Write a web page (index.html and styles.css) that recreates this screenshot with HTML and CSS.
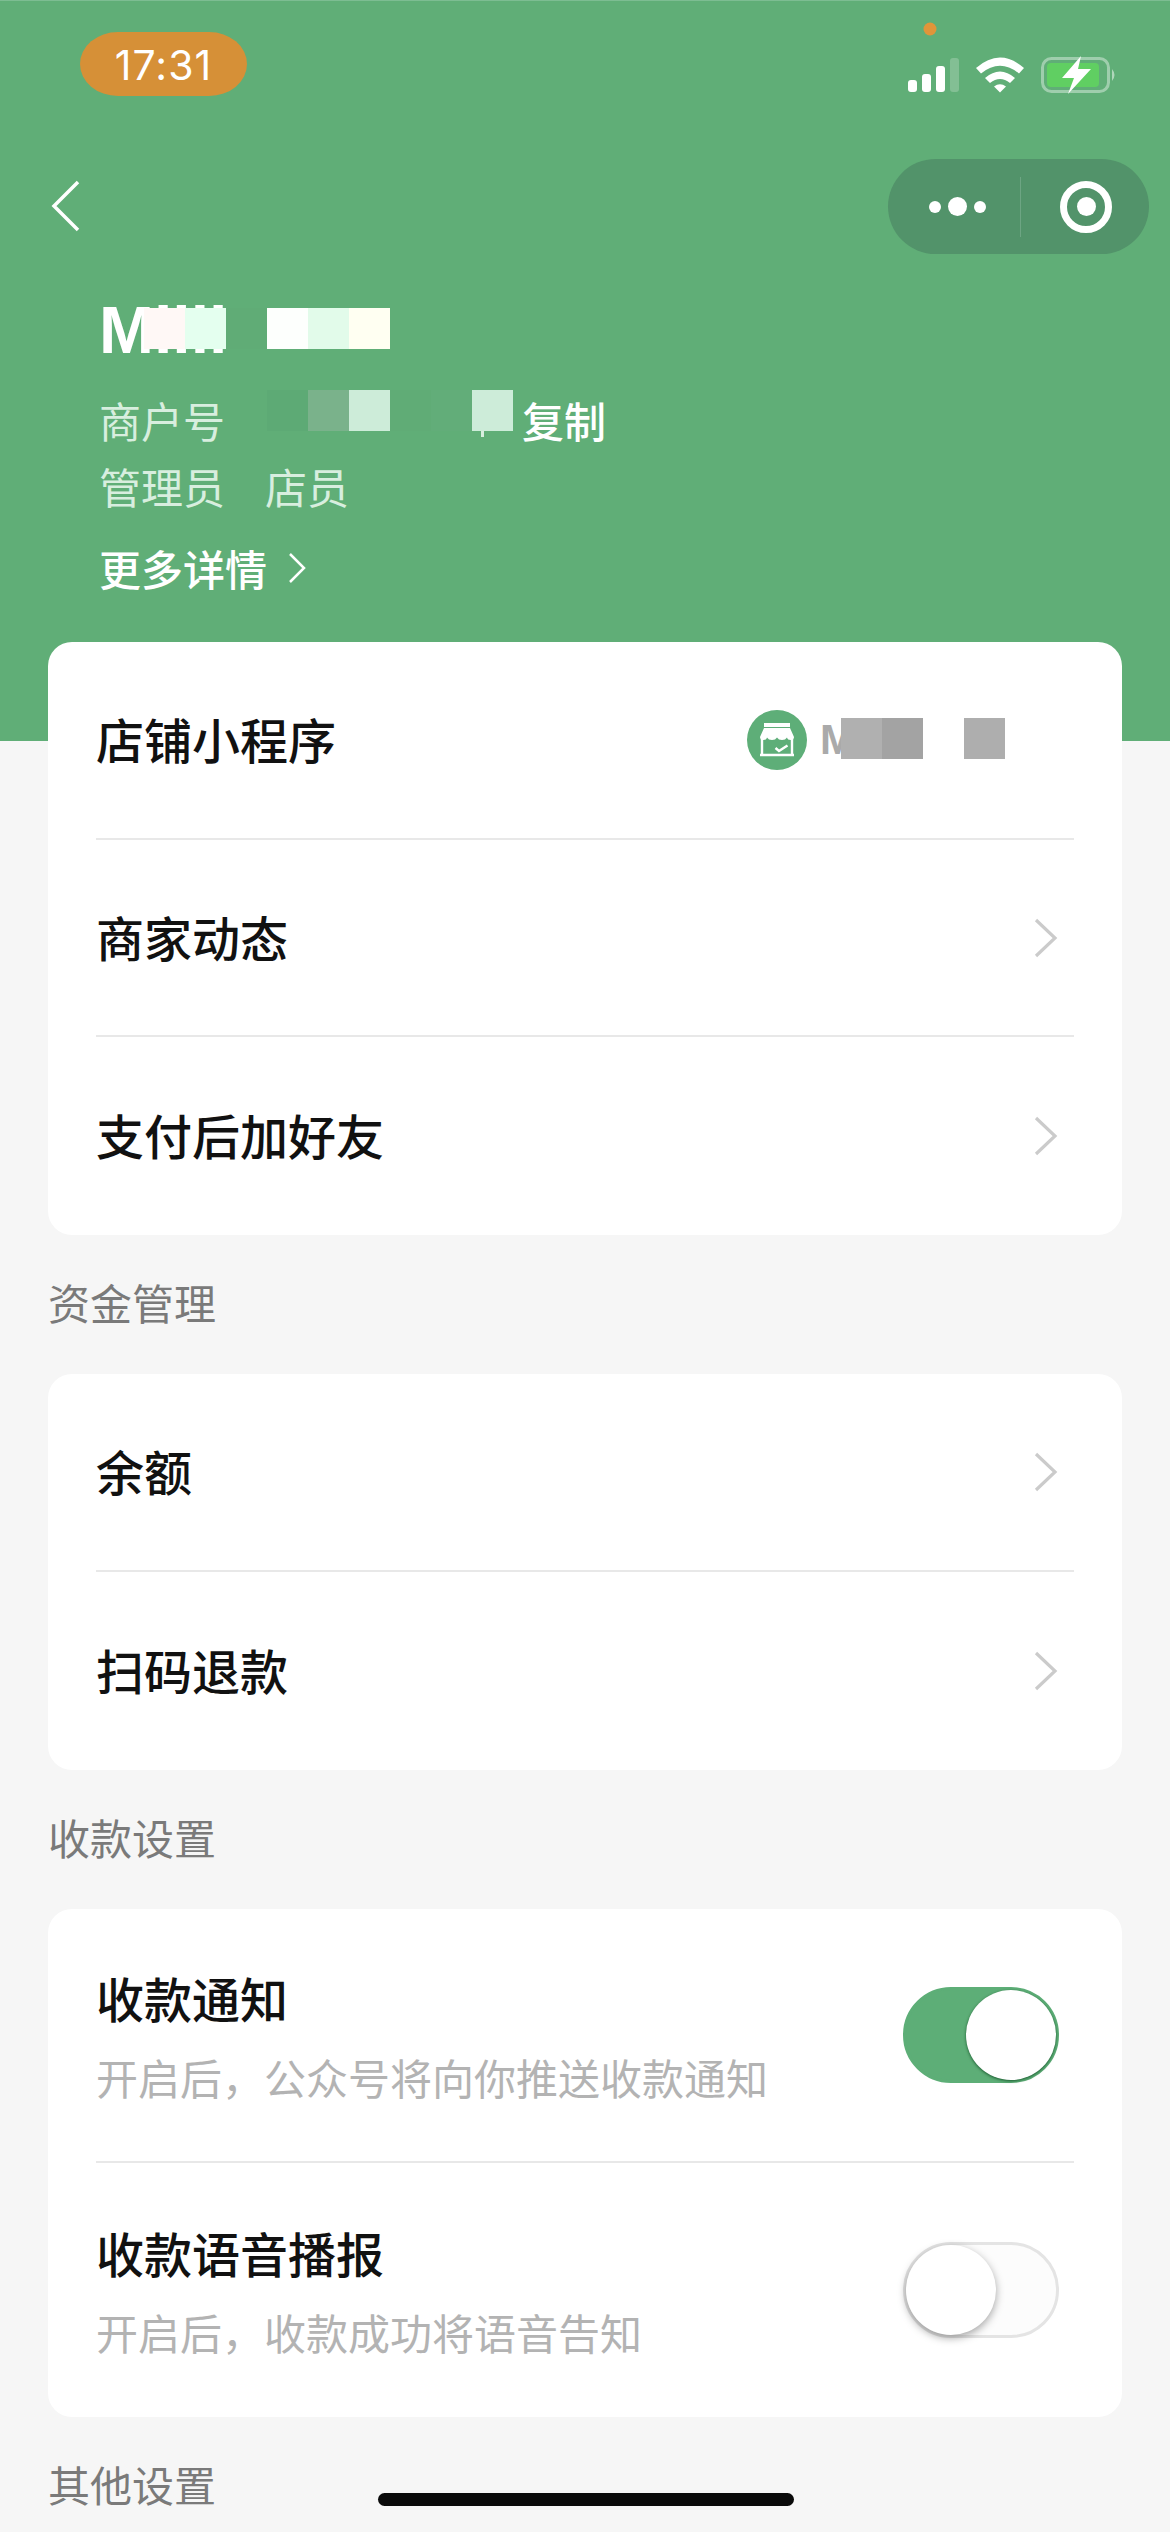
FILE: index.html
```html
<!DOCTYPE html>
<html lang="zh-CN">
<head>
<meta charset="utf-8">
<title>商家助手</title>
<link rel="stylesheet" href="styles.css">
</head>
<body>
<div class="page">
  <header class="hero">
    <div class="status">
      <div class="time">17:31</div>
      <svg class="status-icons" width="230" height="96" viewBox="890 0 230 96">
        <circle cx="929" cy="28" r="6.5" fill="#e0953a"/>
        <rect x="907" y="79" width="9" height="12" rx="3" fill="#fff"/>
        <rect x="921" y="73" width="9" height="18" rx="3" fill="#fff"/>
        <rect x="935" y="65" width="9" height="26" rx="3" fill="#fff"/>
        <rect x="949" y="57" width="9" height="34" rx="3" fill="#fff" opacity=".22"/>
        <path d="M975 67 Q999 46 1023 67 L1018 72.500 Q999 57 980 72.500Z" fill="#fff"/>
        <path d="M984 77 Q999 64 1014 77 L1009 82 Q999 74 989 82Z" fill="#fff"/>
        <path d="M993 85.500 Q999 81 1005 85.500 L999 91.500Z" fill="#fff"/>
        <rect x="1041.500" y="57.500" width="66" height="33" rx="9" fill="none" stroke="#fff" stroke-opacity=".4" stroke-width="3"/>
        <rect x="1046" y="62" width="52" height="24" rx="4" fill="#60cf62"/>
        <path d="M1111 68 Q1116 74 1111 80Z" fill="#fff" fill-opacity=".5"/>
        <path d="M1080 55 L1061 77 L1073 77 L1067 93 L1090 68 L1077 68Z" fill="#fff"/>
      </svg>
    </div>
    <nav class="nav">
      <svg class="back" width="30" height="52" viewBox="0 0 30 52"><path d="M27 2 L3 26 L27 50" fill="none" stroke="#fff" stroke-width="3.500"/></svg>
      <div class="capsule">
        <div class="capsule-more">
          <i class="dot"></i><i class="dot dot-big"></i><i class="dot"></i>
        </div>
        <div class="capsule-sep"></div>
        <div class="capsule-close"><i class="ring"></i></div>
      </div>
    </nav>
    <section class="merchant">
      <div class="name">Milli
        <div class="name-mosaic">
          <i class="cell c-fff6"></i><i class="cell c-e4ff"></i><i class="cell c-bg1"></i><i class="cell c-fff"></i><i class="cell c-e2fb"></i><i class="cell c-fffe"></i>
        </div>
      </div>
      <div class="meta id-row">
        <span class="meta-label">商户号</span>
        <i class="cell c-bg2"></i><i class="cell c-7ab"></i><i class="cell c-cde"></i><i class="cell c-bg1"></i><i class="cell c-bg3"></i><i class="cell c-cde cell-tail"></i>
        <span class="copy">复制</span>
      </div>
      <div class="meta role-row">
        <span class="meta-label">管理员</span><span>店员</span>
      </div>
      <div class="more">更多详情
        <svg width="20" height="32" viewBox="0 0 20 32"><path d="M3 2 L17 16 L3 30" fill="none" stroke="#fff" stroke-width="2.500"/></svg>
      </div>
    </section>
  </header>

  <main class="content">
    <section class="card">
      <div class="row row-a">
        <span class="row-title">店铺小程序</span>
        <div class="shop">
          <svg class="shop-icon" width="60" height="60" viewBox="0 0 60 60">
            <circle cx="30" cy="30" r="30" fill="#5eae78"/>
            <path d="M17 13 H43 V17 H17Z" fill="#fff"/>
            <path d="M17 18 H43 L47 27 Q47 30 43.700 30 Q40.500 30 40 27.500 Q38.500 30 35 30 Q31.500 30 30 27.500 Q28.500 30 25 30 Q21.500 30 20 27.500 Q19.500 30 16.300 30 Q13 30 13 27Z" fill="#fff"/>
            <path d="M15 29 V45 M45 29 V45" stroke="#fff" stroke-width="2.400"/>
            <path d="M13 45 H47" stroke="#fff" stroke-width="2.400"/>
            <path d="M28.500 38 L32 41 L40.500 35.500" fill="none" stroke="#fff" stroke-width="2.400"/>
          </svg>
          <span class="shop-name">M</span>
          <div class="shop-mosaic"><i class="cell c-b0"></i><i class="cell c-a3"></i><i class="cell c-none"></i><i class="cell c-ae"></i></div>
        </div>
      </div>
      <div class="row">
        <span class="row-title">商家动态</span>
        <svg class="chev" width="26" height="42" viewBox="0 0 26 42"><path d="M3 3 L22 21 L3 39" fill="none" stroke="#cbcbcb" stroke-width="3.200"/></svg>
      </div>
      <div class="row row-end">
        <span class="row-title">支付后加好友</span>
        <svg class="chev" width="26" height="42" viewBox="0 0 26 42"><path d="M3 3 L22 21 L3 39" fill="none" stroke="#cbcbcb" stroke-width="3.200"/></svg>
      </div>
    </section>

    <h2 class="section-title">资金管理</h2>
    <section class="card">
      <div class="row row-a">
        <span class="row-title">余额</span>
        <svg class="chev" width="26" height="42" viewBox="0 0 26 42"><path d="M3 3 L22 21 L3 39" fill="none" stroke="#cbcbcb" stroke-width="3.200"/></svg>
      </div>
      <div class="row row-end">
        <span class="row-title">扫码退款</span>
        <svg class="chev" width="26" height="42" viewBox="0 0 26 42"><path d="M3 3 L22 21 L3 39" fill="none" stroke="#cbcbcb" stroke-width="3.200"/></svg>
      </div>
    </section>

    <h2 class="section-title">收款设置</h2>
    <section class="card">
      <div class="row row-tall">
        <div class="row-text">
          <span class="row-title">收款通知</span>
          <span class="row-desc">开启后，公众号将向你推送收款通知</span>
        </div>
        <div class="toggle toggle-on"><i class="knob"></i></div>
      </div>
      <div class="row row-tall">
        <div class="row-text">
          <span class="row-title">收款语音播报</span>
          <span class="row-desc">开启后，收款成功将语音告知</span>
        </div>
        <div class="toggle"><i class="knob"></i></div>
      </div>
    </section>

    <h2 class="section-title">其他设置</h2>
  </main>
  <div class="home-bar"></div>
</div>
</body>
</html>
```
FILE: styles.css
```css
* { box-sizing: border-box; }
html, body { margin: 0; padding: 0; }
body {
  font-family: "Noto Sans CJK SC", "Liberation Sans", sans-serif;
  background: #f6f6f6;
}
i { display: block; font-style: normal; }

.page {
  width: 1170px;
  height: 2532px;
  overflow: hidden;
  position: relative;
  background: #f6f6f6;
}

/* header */
.hero {
  height: 741px;
  background: #60ae77;
  border-top: 1px solid #7dbd92;
  color: #fff;
}
.status {
  height: 96px;
  display: flex;
  justify-content: space-between;
}
.time {
  margin: 31px 0 0 80px;
  width: 167px;
  height: 64px;
  border-radius: 38px / 32px;
  background: #d69037;
  font: 400 41px/66px Inter, sans-serif;
  letter-spacing: 1px;
  text-align: center;
  color: #fff;
}
.status-icons { margin-right: 49px; }

.nav {
  display: flex;
  justify-content: space-between;
  align-items: center;
  height: 95px;
  margin-top: 62px;
  padding: 0 21px 0 51px;
}
.back { margin-top: -1px; }
.capsule {
  width: 261px;
  height: 95px;
  border-radius: 48px;
  background: #52936a;
  display: flex;
  align-items: center;
}
.capsule-more {
  width: 132px;
  display: flex;
  align-items: center;
  justify-content: flex-end;
  gap: 7px;
  padding-right: 34px;
}
.dot { width: 12px; height: 12px; border-radius: 50%; background: #fff; }
.dot-big { width: 19px; height: 19px; }
.capsule-sep { width: 1px; height: 60px; background: #6da583; }
.capsule-close { flex: 1; display: flex; justify-content: center; padding-left: 2px; }
.ring {
  width: 52px;
  height: 52px;
  border-radius: 50%;
  border: 7px solid #fff;
  display: flex;
  align-items: center;
  justify-content: center;
}
.ring::after {
  content: "";
  width: 19px;
  height: 19px;
  border-radius: 50%;
  background: #fff;
}

.merchant { padding-left: 99px; margin-top: 36px; }
.name {
  position: relative;
  height: 80px;
  font: 700 66px/80px "Liberation Sans", sans-serif;
}
.name-mosaic {
  position: absolute;
  left: 45px;
  top: 18px;
  display: flex;
}
.cell { width: 41px; height: 41px; flex: none; }
.c-fff6 { background: #fff8f6; }
.c-e4ff { background: #e4ffef; }
.c-bg1 { background: #60ac76; }
.c-bg2 { background: #5daa75; }
.c-bg3 { background: #62ad79; }
.c-fff { background: #fdfffd; }
.c-e2fb { background: #e2fbea; }
.c-fffe { background: #fffff2; }
.c-7ab { background: #7ab28b; }
.c-cde { background: #cdecd9; }
.c-b0 { background: #b0b0b0; }
.c-a3 { background: #a3a3a3; }
.c-ae { background: #aeaeae; }
.c-none { background: transparent; }

.meta {
  display: flex;
  font-size: 42px;
  line-height: 60px;
  color: #d8eedf;
}
.id-row { margin-top: 20px; height: 66px; }
.meta-label { width: 168px; flex: none; }
.role-row .meta-label { width: 166px; }
.cell-tail { position: relative; }
.cell-tail::after {
  content: "";
  position: absolute;
  left: 9px;
  top: 41px;
  width: 3px;
  height: 6px;
  background: #d8eedf;
}
.copy {
  margin-left: 9px;
  color: #fff;
  font-weight: 500;
}
.role-row { height: 66px; }
.more {
  margin-top: 13px;
  display: flex;
  align-items: center;
  gap: 20px;
  font-size: 42px;
  line-height: 66px;
  font-weight: 500;
}

/* body */
.content { margin-top: -99px; padding: 0 48px; position: relative; }
.card {
  background: #fff;
  border-radius: 24px;
  padding: 0 48px;
}
.row {
  height: 197px;
  display: flex;
  align-items: center;
  justify-content: space-between;
  border-top: 2px solid #e8e8e8;
}
.row-a, .row:first-child { border-top: 0; height: 196px; }
.row-end { height: 200px; }
.row > .row-title { margin-bottom: 4px; }
.row-tall { height: 256px; }
.row-tall:first-child { height: 252px; }
.row-title {
  font-size: 48px;
  line-height: 66px;
  font-weight: 500;
  color: #111;
}
.row-text { display: flex; flex-direction: column; gap: 17px; }
.row-desc {
  font-size: 42px;
  line-height: 60px;
  color: #b3b3b3;
}
.chev { margin-right: 15px; }

.shop { display: flex; align-items: center; width: 327px; height: 60px; }
.shop-icon { flex: none; }
.shop-name {
  margin-left: 13px;
  font: 700 42px/60px "Liberation Sans", sans-serif;
  color: #aaa;
  width: 21px;
}
.shop-mosaic { display: flex; margin-top: -4px; }

.section-title {
  margin: 0;
  height: 139px;
  padding-top: 37px;
  font-size: 42px;
  line-height: 60px;
  font-weight: 400;
  color: #7a7a7a;
}
.section-title:last-child { height: auto; }

.toggle {
  width: 156px;
  height: 96px;
  margin-right: 15px;
  border-radius: 48px;
  border: 3px solid #e4e4e4;
  background: #fcfcfc;
  display: flex;
  align-items: center;
}
.toggle-on {
  background: #5dae77;
  border-color: #5dae77;
  justify-content: flex-end;
}
.knob {
  width: 90px;
  height: 90px;
  border-radius: 50%;
  background: #fff;
  box-shadow: 0 3px 9px rgba(0, 0, 0, .35);
}
.toggle-on .knob { box-shadow: 0 1px 3px rgba(0, 60, 20, .75); }

.home-bar {
  position: absolute;
  left: 378px;
  top: 2493px;
  width: 416px;
  height: 13px;
  border-radius: 7px;
  background: #0a0a0a;
}
```
